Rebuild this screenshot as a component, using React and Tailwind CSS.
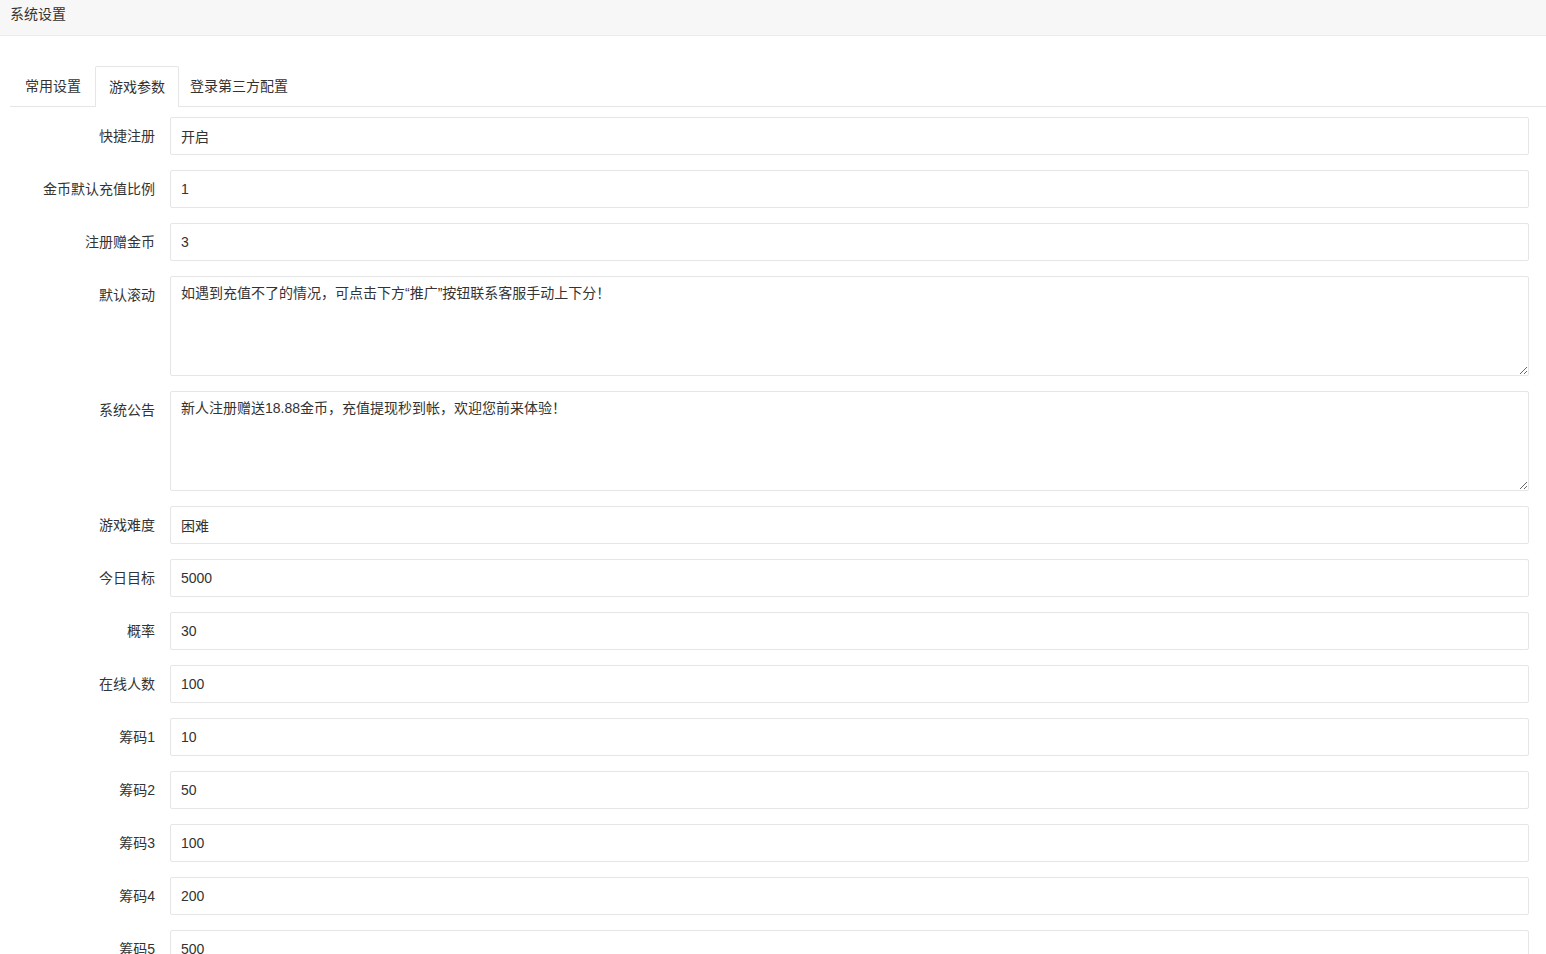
import React, { useState } from "react";

const rows = [
  { label: "快捷注册", value: "开启" },
  { label: "金币默认充值比例", value: "1" },
  { label: "注册赠金币", value: "3" },
  { label: "默认滚动", value: "如遇到充值不了的情况，可点击下方“推广”按钮联系客服手动上下分！", area: true },
  { label: "系统公告", value: "新人注册赠送18.88金币，充值提现秒到帐，欢迎您前来体验！", area: true },
  { label: "游戏难度", value: "困难" },
  { label: "今日目标", value: "5000" },
  { label: "概率", value: "30" },
  { label: "在线人数", value: "100" },
  { label: "筹码1", value: "10" },
  { label: "筹码2", value: "50" },
  { label: "筹码3", value: "100" },
  { label: "筹码4", value: "200" },
  { label: "筹码5", value: "500" },
];

export default function App() {
  const [tab, setTab] = useState(1);

  const tabCls = (i) => {
    if (i === tab)
      return "-mb-px h-[41px] rounded-t-[2px] border border-b-0 border-[#e6e6e6] bg-white px-[13px] text-[14px] leading-[40px] text-[#333]";
    if (i === 0) return "h-[40px] pl-[15px] pr-[14px] text-[14px] leading-[40px] text-[#333]";
    return "h-[40px] pl-[11px] pr-[15px] text-[14px] leading-[40px] text-[#333]";
  };

  return (
    <div
      className="min-h-screen bg-white text-[#333]"
      style={{ fontFamily: '"Liberation Sans", "Noto Sans CJK SC", sans-serif' }}
    >
      {/* header */}
      <div className="h-[36px] border-b border-[#ececec] bg-[#f7f7f7] pl-[10px] pt-[4px] text-[14px] leading-[20px] text-[#333]">
        系统设置
      </div>

      {/* tabs */}
      <div className="ml-[10px] mt-[30px] flex h-[41px] border-b border-[#e6e6e6]">
        {["常用设置", "游戏参数", "登录第三方配置"].map((t, i) => (
          <button key={t} type="button" onClick={() => setTab(i)} className={tabCls(i)}>
            {t}
          </button>
        ))}
      </div>

      {/* form */}
      <div className="ml-[10px] mr-[17px] mt-[10px] flex flex-col gap-[15px]">
        {rows.map((r) => (
          <div key={r.label} className="flex">
            <label className="w-[160px] shrink-0 pr-[15px] pt-[9px] text-right text-[14px] leading-[20px] text-[#333]">
              {r.label}
            </label>
            {r.area ? (
              <textarea
                defaultValue={r.value}
                className="h-[100px] flex-1 rounded-[2px] border border-[#e6e6e6] bg-white px-[10px] pt-[6px] text-[14px] leading-[20px] text-[#333] outline-none"
              />
            ) : (
              <input
                defaultValue={r.value}
                className="h-[38px] flex-1 rounded-[2px] border border-[#e6e6e6] bg-white px-[10px] pb-[1px] text-[14px] text-[#333] outline-none"
              />
            )}
          </div>
        ))}
      </div>
    </div>
  );
}
